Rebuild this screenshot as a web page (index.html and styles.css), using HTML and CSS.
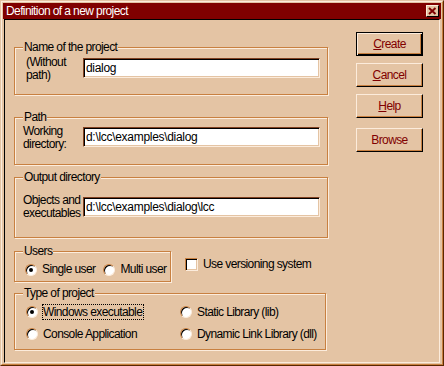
FILE: index.html
```html
<!DOCTYPE html>
<html>
<head>
  <meta charset="utf-8">
  <title>Definition of a new project</title>
  <link rel="stylesheet" href="styles.css">
</head>
<body>
  <div class="window">
    <div class="frame">
      <div class="titlebar">
        <span class="title">Definition of a new project</span>
        <span class="close">
          <svg width="9" height="8" viewBox="0 0 9 8"><path d="M1 1 L7.5 7 M7.5 1 L1 7" stroke="#800000" stroke-width="2" fill="none"/></svg>
        </span>
      </div>

      <div class="client">
        <div class="left">
          <fieldset class="group g-name">
            <legend>Name of the project</legend>
            <div class="row">
              <label class="lbl lbl-name">(Without<br>path)</label>
              <input class="edit" type="text" value="dialog">
            </div>
          </fieldset>

          <fieldset class="group g-path">
            <legend>Path</legend>
            <div class="row">
              <label class="lbl">Working<br>directory:</label>
              <input class="edit" type="text" value="d:\lcc\examples\dialog">
            </div>
          </fieldset>

          <fieldset class="group g-out">
            <legend>Output directory</legend>
            <div class="row row-out">
              <label class="lbl">Objects and<br>executables</label>
              <input class="edit" type="text" value="d:\lcc\examples\dialog\lcc">
            </div>
          </fieldset>

          <div class="users-row">
            <fieldset class="group g-users">
              <legend>Users</legend>
              <div class="opts">
                <span class="opt"><span class="radio on"></span>Single user</span>
                <span class="opt opt-multi"><span class="radio"></span>Multi user</span>
              </div>
            </fieldset>
            <span class="check-item"><span class="check"></span>Use versioning system</span>
          </div>

          <fieldset class="group g-type">
            <legend>Type of project</legend>
            <div class="type-grid">
              <span class="opt"><span class="radio on focus-r"></span><span class="focus">Windows executable</span></span>
              <span class="opt"><span class="radio"></span>Static Library (lib)</span>
              <span class="opt"><span class="radio"></span>Console Application</span>
              <span class="opt"><span class="radio"></span>Dynamic Link Library (dll)</span>
            </div>
          </fieldset>
        </div>

        <div class="buttons">
          <button class="btn default"><u>C</u>reate</button>
          <button class="btn"><u>C</u>ancel</button>
          <button class="btn"><u>H</u>elp</button>
          <button class="btn btn-browse">Browse</button>
        </div>
      </div>
    </div>
  </div>
</body>
</html>
```

FILE: styles.css
```css
body {
  margin: 0;
  background-color: #e4c4a4;
  font-family: "Liberation Sans", Arial, sans-serif;
  font-size: 12px;
  line-height: 13px;
  letter-spacing: -0.6px;
  color: #000000;
}

.window {
  width: 444px;
  height: 366px;
  box-sizing: border-box;
  border: 1px solid;
  border-color: #e4c4a4 #5a2800 #5a2800 #e4c4a4;
}

.frame {
  height: 100%;
  box-sizing: border-box;
  border: 1px solid;
  border-color: #fcecdc #c88040 #c88040 #fcecdc;
  padding: 1px;
  display: flex;
  flex-direction: column;
}

/* title bar */
.titlebar {
  height: 16px;
  flex: none;
  background-color: #800000;
  color: #ffffff;
  display: flex;
  align-items: center;
  justify-content: space-between;
  padding: 0 2px 0 3px;
}

.close {
  width: 13px;
  height: 12px;
  box-sizing: border-box;
  background-color: #e4c4a4;
  border: 1px solid;
  border-color: #fcecdc #000000 #000000 #fcecdc;
  display: flex;
  align-items: center;
  justify-content: center;
}

/* client area */
.client {
  flex: 1;
  margin: 0 1px 0 1px;
  border-top: 1px solid #000000;
  border-left: 1px solid #000000;
  border-right: 1px solid #fcecdc;
  border-bottom: 1px solid #fcecdc;
  display: flex;
  align-items: flex-start;
  padding: 12px 0 0 9px;
  white-space: nowrap;
}

.left {
  width: 314px;
  flex: none;
  margin-top: 9px;
}

/* group boxes */
.group {
  margin: 0;
  border: 1px solid #c88040;
  box-shadow: 1px 1px 0 #fcecdc, inset 1px 1px 0 #fcecdc;
  min-inline-size: 0;
  padding: 2px 7px 12px 8px;
}

.group legend {
  padding: 0 1px;
  line-height: 13px;
  background-color: #e4c4a4;
}

.g-path {
  margin-top: 16px;
  padding-top: 1px;
  padding-bottom: 13px;
}

.g-out {
  margin-top: 6px;
  padding-top: 10px;
  padding-bottom: 17px;
}

.row {
  display: flex;
  align-items: flex-start;
}

.lbl {
  width: 60px;
  flex: none;
}

.lbl-name {
  width: 57px;
  padding-left: 3px;
}

.edit {
  width: 237px;
  height: 20px;
  box-sizing: border-box;
  margin: 2px 0 0 0;
  padding: 0 0 0 2px;
  font: inherit;
  letter-spacing: -0.3px;
  color: #000000;
  background-color: #ffffff;
  border: 1px solid;
  border-color: #804020 #fcecdc #fcecdc #804020;
  box-shadow: inset 1px 1px 0 #000000, inset -1px -1px 0 #e4c4a4;
  outline: none;
}

.row-out .edit {
  margin-top: 3px;
}

/* users + versioning */
.users-row {
  display: flex;
  align-items: flex-start;
  margin-top: 7px;
}

.g-users {
  width: 157px;
  flex: none;
  box-sizing: border-box;
  padding-top: 5px;
  padding-bottom: 5px;
  padding-right: 2px;
}

.opts {
  display: flex;
  margin-left: 2px;
}

.opt {
  display: flex;
  align-items: center;
}

.opt-multi {
  margin-left: 8px;
}

.radio {
  width: 12px;
  height: 12px;
  box-sizing: border-box;
  border-radius: 50%;
  background-color: #ffffff;
  border: 1px solid;
  border-color: #c88040 #fcecdc #fcecdc #c88040;
  box-shadow: inset 1px 1px 0 #000000;
  margin-right: 5px;
  position: relative;
  flex: none;
}

.radio.on::after {
  content: "";
  position: absolute;
  left: 3px;
  top: 3px;
  width: 4px;
  height: 4px;
  border-radius: 50%;
  background-color: #000000;
}

.check-item {
  display: flex;
  align-items: center;
  margin: 13px 0 0 14px;
}

.check {
  width: 13px;
  height: 13px;
  box-sizing: border-box;
  background-color: #ffffff;
  border: 1px solid;
  border-color: #c88040 #fcecdc #fcecdc #c88040;
  box-shadow: inset 1px 1px 0 #000000, inset -1px -1px 0 #e4c4a4;
  margin-right: 5px;
}

/* type of project */
.g-type {
  width: 312px;
  box-sizing: border-box;
  margin-top: 5px;
  padding-top: 4px;
  padding-bottom: 7px;
}

.type-grid {
  display: grid;
  grid-template-columns: 154px auto;
  grid-auto-rows: 16px;
  row-gap: 6px;
  margin-left: 3px;
}

.focus-r {
  margin-right: 4px;
}

.focus {
  border: 1px dotted #000000;
  line-height: 14px;
  padding-right: 1px;
}

/* buttons */
.buttons {
  display: flex;
  flex-direction: column;
  margin-left: 28px;
}

.btn {
  width: 67px;
  height: 24px;
  box-sizing: border-box;
  margin: 0 0 7px 0;
  padding: 0;
  font: inherit;
  letter-spacing: inherit;
  color: #800000;
  background-color: #e4c4a4;
  border: 1px solid;
  border-color: #fcecdc #000000 #000000 #fcecdc;
  box-shadow: inset -1px -1px 0 #c88040;
}

.btn.default {
  border-color: #000000;
  box-shadow: inset 1px 1px 0 #fcecdc, inset -1px -1px 0 #000000, inset -2px -2px 0 #c88040;
}

.btn-browse {
  margin-top: 3px;
}
```
